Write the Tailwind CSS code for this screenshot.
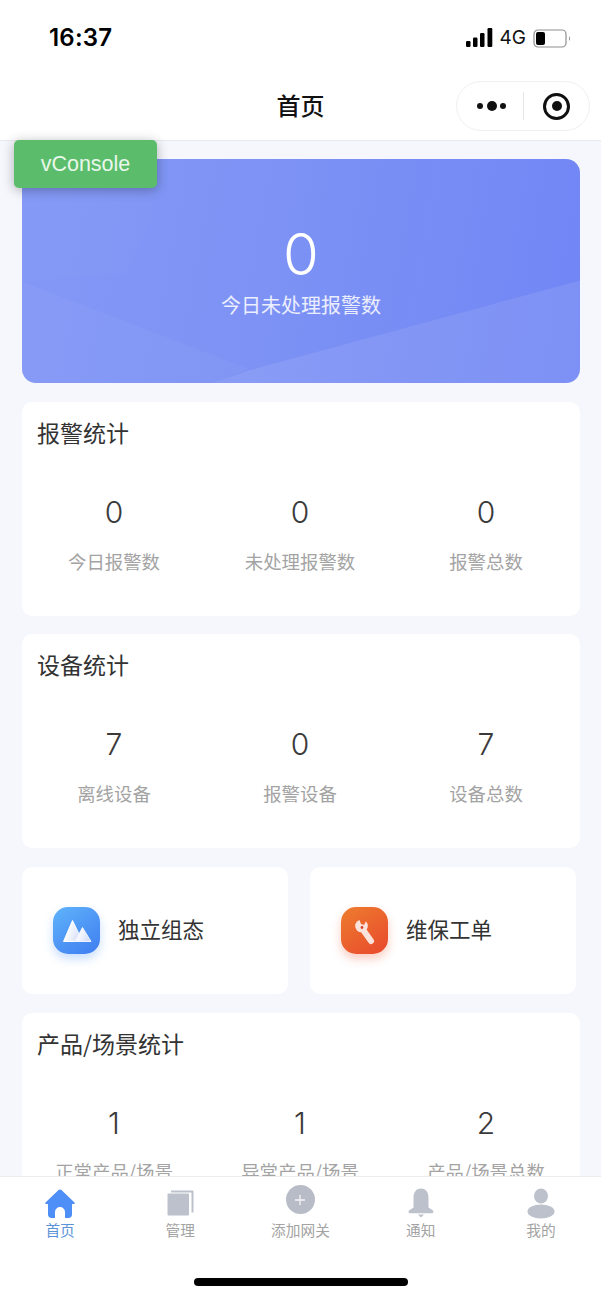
<!DOCTYPE html>
<html lang="zh">
<head>
<meta charset="utf-8">
<script src="https://cdn.jsdelivr.net/npm/@tailwindcss/browser@4"></script>
</head>
<body class="m-0 bg-white">
<div class="relative flex flex-col w-[601px] h-[1298px] overflow-hidden bg-[#f5f7fc] font-['Noto_Sans_CJK_SC','Liberation_Sans',sans-serif]">
  <!-- header -->
  <header class="shrink-0 h-[141px] bg-white border-b border-[#e8e9ec] flex flex-col">
    <div class="h-[76px] pt-[22px] pl-[49px] pr-[28px] flex items-start justify-between">
      <span class="text-[24px] leading-[32px] font-semibold text-black tracking-[0.2px] font-['Inter','Liberation_Sans',sans-serif]">16:37</span>
      <div class="flex items-center gap-[5px] h-[32px]">
        <svg width="27" height="19" viewBox="0 0 27 19" class="mt-[-1px]"><rect x="0" y="13" width="4.5" height="6" rx="1.2" fill="#000"/><rect x="7" y="9.5" width="4.5" height="9.5" rx="1.2" fill="#000"/><rect x="14" y="5" width="4.5" height="14" rx="1.2" fill="#000"/><rect x="21.5" y="0" width="4.8" height="19" rx="1.2" fill="#000"/></svg>
        <span class="text-[19px] leading-[32px] text-[#111] ml-[2px] font-['Inter','Liberation_Sans',sans-serif]">4G</span>
        <svg width="40" height="19" viewBox="0 0 40 19" class="ml-[2px]"><rect x="1" y="1" width="32" height="17" rx="4" fill="none" stroke="#8f8f8f" stroke-width="1.2"/><rect x="3" y="3" width="9" height="13" rx="2" fill="#000"/><path d="M36 7q2 2.500 0 5z" fill="#8f8f8f"/></svg>
      </div>
    </div>
    <div class="relative flex-1 flex items-center justify-center pb-[7px]">
      <span class="text-[24px] font-medium text-[#111] leading-[32px]">首页</span>
      <div class="absolute right-[11px] top-[5px] w-[134px] h-[50px] rounded-full border border-[#f0f0f0] bg-white flex items-center">
        <div class="flex-1 flex items-center justify-center gap-[3.5px] pl-[3px]">
          <span class="w-[6px] h-[6px] rounded-full bg-[#111]"></span>
          <span class="w-[10px] h-[10px] rounded-full bg-[#111]"></span>
          <span class="w-[6px] h-[6px] rounded-full bg-[#111]"></span>
        </div>
        <span class="w-px h-[28px] bg-[#e6e6e6]"></span>
        <div class="w-[65px] flex items-center justify-center">
          <span class="w-[27px] h-[27px] rounded-full border-[3.5px] border-[#111] flex items-center justify-center"><span class="w-[10px] h-[10px] rounded-full bg-[#111]"></span></span>
        </div>
      </div>
    </div>
  </header>

  <!-- content -->
  <main class="flex-1 min-h-0 overflow-hidden pt-[18px] pl-[22px] pr-[21px] flex flex-col gap-[18px]">
    <section class="relative shrink-0 h-[224px] mb-[1px] rounded-[14px] overflow-hidden bg-[linear-gradient(100deg,#8398f6_0%,#7d92f4_45%,#7186f5_100%)] flex flex-col items-center text-white">
      <svg class="absolute inset-0 w-full h-full" viewBox="0 0 558 225" preserveAspectRatio="none">
        <path d="M0 123L227 211 190 225H0z" fill="#fff" fill-opacity="0.035"/>
        <path d="M0 0H130V60L105 115 0 123z" fill="#fff" fill-opacity="0.02"/>
        <path d="M558 122L228 212 190 225H558z" fill="#fff" fill-opacity="0.085"/>
      </svg>
      <span class="relative mt-[62px] text-[58px] leading-[66px] font-light font-['Inter','Liberation_Sans',sans-serif]">0</span>
      <span class="relative mt-[4px] text-[20px] leading-[28px] text-white/85">今日未处理报警数</span>
    </section>

    <section class="shrink-0 h-[214px] rounded-[10px] bg-white pt-[14px]">
      <h2 class="px-[15px] text-[23px] leading-[32px] text-[#333] font-normal">报警统计</h2>
      <div class="grid grid-cols-3 mt-[46px] -ml-px mr-px text-center">
        <div class="flex flex-col items-center gap-[18px]"><span class="text-[30px] leading-[36px] text-[#3a3a3a] font-light font-['Inter','Liberation_Sans',sans-serif]">0</span><span class="text-[18.4px] leading-[26px] text-[#a3a3a3]">今日报警数</span></div>
        <div class="flex flex-col items-center gap-[18px]"><span class="text-[30px] leading-[36px] text-[#3a3a3a] font-light font-['Inter','Liberation_Sans',sans-serif]">0</span><span class="text-[18.4px] leading-[26px] text-[#a3a3a3]">未处理报警数</span></div>
        <div class="flex flex-col items-center gap-[18px]"><span class="text-[30px] leading-[36px] text-[#3a3a3a] font-light font-['Inter','Liberation_Sans',sans-serif]">0</span><span class="text-[18.4px] leading-[26px] text-[#a3a3a3]">报警总数</span></div>
      </div>
    </section>

    <section class="shrink-0 h-[214px] rounded-[10px] bg-white pt-[14px]">
      <h2 class="px-[15px] text-[23px] leading-[32px] text-[#333] font-normal">设备统计</h2>
      <div class="grid grid-cols-3 mt-[46px] -ml-px mr-px text-center">
        <div class="flex flex-col items-center gap-[18px]"><span class="text-[30px] leading-[36px] text-[#3a3a3a] font-light font-['Inter','Liberation_Sans',sans-serif]">7</span><span class="text-[18.4px] leading-[26px] text-[#a3a3a3]">离线设备</span></div>
        <div class="flex flex-col items-center gap-[18px]"><span class="text-[30px] leading-[36px] text-[#3a3a3a] font-light font-['Inter','Liberation_Sans',sans-serif]">0</span><span class="text-[18.4px] leading-[26px] text-[#a3a3a3]">报警设备</span></div>
        <div class="flex flex-col items-center gap-[18px]"><span class="text-[30px] leading-[36px] text-[#3a3a3a] font-light font-['Inter','Liberation_Sans',sans-serif]">7</span><span class="text-[18.4px] leading-[26px] text-[#a3a3a3]">设备总数</span></div>
      </div>
    </section>

    <div class="shrink-0 flex gap-[22px] mt-[1px]">
      <div class="w-[266px] h-[127px] rounded-[10px] bg-white flex items-center pl-[31px] gap-[18px]">
        <div class="w-[47px] h-[47px] rounded-[15px] bg-[linear-gradient(145deg,#5fb3fb,#3f7df0)] shadow-[0_5px_10px_rgba(80,150,250,0.3)] flex items-center justify-center">
          <svg width="30" height="24" viewBox="0 0 30 24"><defs><linearGradient id="m" x1="0" y1="0" x2="1" y2="0.4"><stop offset="0.3" stop-color="#fff"/><stop offset="1" stop-color="#d5dff9"/></linearGradient></defs><path d="M10.500 1.500L20.500 22.500H1.500z" fill="url(#m)" stroke="#fff" stroke-width="1" stroke-linejoin="round"/><path d="M20.500 8.500L29 22.500H13z" fill="url(#m)" stroke="#eef2fd" stroke-width="1" stroke-linejoin="round"/></svg>
        </div>
        <span class="text-[21.5px] leading-[30px] mb-[4px] text-[#333]">独立组态</span>
      </div>
      <div class="w-[266px] h-[127px] rounded-[10px] bg-white flex items-center pl-[31px] gap-[18px]">
        <div class="w-[47px] h-[47px] rounded-[15px] bg-[linear-gradient(145deg,#ee7d2f,#e8482c)] shadow-[0_5px_10px_rgba(240,90,50,0.3)] flex items-center justify-center">
          <svg width="24" height="30" viewBox="0 0 24 30"><path d="M9.500 13L18 25" stroke="#fbe3dc" stroke-width="6" stroke-linecap="round"/><circle cx="8.500" cy="10" r="6.300" fill="#fbe3dc"/><path d="M6 2.500L8 8l3 1 3-5.500z" fill="#ec682e"/><circle cx="9" cy="11.500" r="1.400" fill="#d8432c"/></svg>
        </div>
        <span class="text-[21.5px] leading-[30px] mb-[4px] text-[#333]">维保工单</span>
      </div>
    </div>

    <section class="shrink-0 h-[214px] rounded-[10px] bg-white pt-[14px] mt-[1px]">
      <h2 class="px-[15px] text-[23px] leading-[32px] text-[#333] font-normal">产品/场景统计</h2>
      <div class="grid grid-cols-3 mt-[46px] -ml-px mr-px text-center">
        <div class="flex flex-col items-center gap-[17px]"><span class="text-[30px] leading-[36px] text-[#3a3a3a] font-light font-['Inter','Liberation_Sans',sans-serif]">1</span><span class="text-[18.4px] leading-[26px] text-[#a3a3a3]">正常产品/场景</span></div>
        <div class="flex flex-col items-center gap-[17px]"><span class="text-[30px] leading-[36px] text-[#3a3a3a] font-light font-['Inter','Liberation_Sans',sans-serif]">1</span><span class="text-[18.4px] leading-[26px] text-[#a3a3a3]">异常产品/场景</span></div>
        <div class="flex flex-col items-center gap-[17px]"><span class="text-[30px] leading-[36px] text-[#3a3a3a] font-light font-['Inter','Liberation_Sans',sans-serif]">2</span><span class="text-[18.4px] leading-[26px] text-[#a3a3a3]">产品/场景总数</span></div>
      </div>
    </section>
  </main>

  <!-- tab bar -->
  <nav class="shrink-0 h-[122px] bg-white border-t border-[#ececec] flex flex-col">
    <div class="grid grid-cols-5 pt-[10px]">
      <div class="flex flex-col items-center">
        <svg width="32" height="32" viewBox="0 0 32 32"><path d="M16 2.500c.8 0 1.500.4 2 .9L30.500 15.500c.6.800.1 1.500-.8 1.500H28v10.500c0 2-1.500 3.500-3.500 3.500H21v-6a5 5 0 0 0-10 0v6H7.500C5.500 31 4 29.500 4 27.500V17H2.300c-.9 0-1.400-.7-.8-1.500L14 3.400c.5-.5 1.200-.9 2-.9z" fill="#4d8ef7"/></svg>
        <span class="text-[14.7px] leading-[20px] mt-[1px] text-[#5b93d8]">首页</span>
      </div>
      <div class="flex flex-col items-center">
        <svg width="32" height="32" viewBox="0 0 32 32"><path d="M7 3.500h21.500a1 1 0 0 1 1 1v21h-2V5.500H7z" fill="#bcc1cb"/><path d="M4.500 6.500H24a1 1 0 0 1 1 1v20a1 1 0 0 1-1 1H4.500a1 1 0 0 1-1-1v-20a1 1 0 0 1 1-1z" fill="#bcc1cb"/></svg>
        <span class="text-[14.7px] leading-[20px] mt-[1px] text-[#a3a3a3]">管理</span>
      </div>
      <div class="flex flex-col items-center">
        <div class="w-[29px] h-[29px] rounded-full bg-[#b7bcc7] flex items-center justify-center mt-[-2px] mb-[5px]">
          <svg width="12" height="12" viewBox="0 0 12 12"><path d="M6 1v10M1 6h10" stroke="#f4f5f7" stroke-width="1.300"/></svg>
        </div>
        <span class="text-[14.7px] leading-[20px] mt-[1px] text-[#a3a3a3]">添加网关</span>
      </div>
      <div class="flex flex-col items-center">
        <svg width="32" height="32" viewBox="0 0 32 32"><path d="M16 1.500c5 0 7.500 4 7.500 9v10l4.500 3c.8.700.4 2.800-1 2.800H5c-1.400 0-1.800-2.100-1-2.800l4.500-3v-10c0-5 2.500-9 7.500-9z" fill="#bcc1cb"/><path d="M13 27.500h6l-3 3z" fill="#bcc1cb"/></svg>
        <span class="text-[14.7px] leading-[20px] mt-[1px] text-[#a3a3a3]">通知</span>
      </div>
      <div class="flex flex-col items-center">
        <svg width="32" height="32" viewBox="0 0 32 32"><ellipse cx="16" cy="9" rx="7" ry="7.500" fill="#bcc1cb"/><ellipse cx="16" cy="24.500" rx="13.500" ry="7" fill="#bcc1cb"/></svg>
        <span class="text-[14.7px] leading-[20px] mt-[1px] text-[#a3a3a3]">我的</span>
      </div>
    </div>
    <div class="flex-1 flex justify-center items-end pb-[12px]">
      <span class="w-[214px] h-[8px] rounded-full bg-black"></span>
    </div>
  </nav>

  <!-- vConsole floating button -->
  <div class="absolute left-[14px] top-[140px] w-[143px] h-[48px] rounded-[5px] bg-[#5bbd6b] shadow-[0_2px_12px_rgba(0,0,0,0.3)] flex items-center justify-center text-[21.5px] text-[#e9f7ea] font-['Liberation_Sans',sans-serif]">vConsole</div>
</div>
</body>
</html>
